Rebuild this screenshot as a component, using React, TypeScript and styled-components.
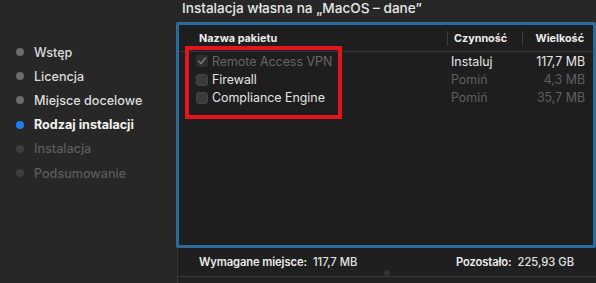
import React from "react";
import styled, { createGlobalStyle } from "styled-components";

const Global = createGlobalStyle`
  html, body { margin: 0; padding: 0; background: #272727; }
  body { font-family: Inter, "Noto Sans", "Liberation Sans", sans-serif; -webkit-font-smoothing: antialiased; }
`;

const Window = styled.div`
  display: flex;
  width: 596px;
  height: 283px;
  background: #272727;
  overflow: hidden;
`;

const Sidebar = styled.ul`
  list-style: none;
  margin: 0;
  padding: 40px 0 0 16px;
  width: 160px;
  display: flex;
  flex-direction: column;
`;

type StepState = "done" | "current" | "todo";

const Step = styled.li<{ $state: StepState }>`
  display: flex;
  align-items: center;
  height: 24.2px;
  gap: 10px;
  font-size: 12.6px;
  font-weight: ${(p) => (p.$state === "current" ? 700 : 500)};
  color: ${(p) =>
    p.$state === "current" ? "#f2f2f2" : p.$state === "done" ? "#dcdcdc" : "#5c5c5c"};
`;

const Bullet = styled.span<{ $state: StepState }>`
  width: 8px;
  height: 8px;
  border-radius: 50%;
  flex: none;
  background: ${(p) =>
    p.$state === "current" ? "#1b7cf6" : p.$state === "done" ? "#6b6b6b" : "#3e3e3e"};
`;

const Main = styled.div`
  flex: 1;
  display: flex;
  flex-direction: column;
  min-width: 0;
`;

const Title = styled.div`
  height: 22px;
  padding-left: 6px;
  font-size: 13.6px;
  font-weight: 500;
  color: #e6e6e6;
  line-height: 17px;
`;

const Box = styled.div`
  position: relative;
  height: 226px;
  box-sizing: border-box;
  border: 3px solid #2a6b9c;
  border-radius: 2px;
  background: #1e1e1e;
  display: flex;
  flex-direction: column;
`;

const HeaderRow = styled.div`
  display: grid;
  grid-template-columns: 268px 75px 1fr;
  height: 27px;
  box-sizing: border-box;
  padding-top: 6px;
  border-bottom: 1px solid #383838;
`;

const HeadCell = styled.div<{ $sep?: boolean; $right?: boolean }>`
  display: flex;
  align-items: center;
  height: 15px;
  font-size: 10.8px;
  font-weight: 700;
  color: #ececec;
  box-sizing: border-box;
  padding-left: ${(p) => (p.$sep ? "6px" : "20px")};
  padding-right: ${(p) => (p.$right ? "9px" : "0")};
  justify-content: ${(p) => (p.$right ? "flex-end" : "flex-start")};
  border-left: ${(p) => (p.$sep ? "1px solid #3c3c3c" : "none")};
`;

const Rows = styled.div`
  display: flex;
  flex-direction: column;
`;

const Row = styled.div`
  display: grid;
  grid-template-columns: 268px 75px 1fr;
  height: 18.4px;
  align-items: center;
  font-size: 12.4px;
`;

const NameCell = styled.div<{ $dim?: boolean }>`
  display: flex;
  align-items: center;
  gap: 4px;
  padding-left: 17px;
  color: ${(p) => (p.$dim ? "#666666" : "#e4e4e4")};
`;

const Check = styled.span<{ $disabled?: boolean }>`
  width: 12px;
  height: 12px;
  border-radius: 3px;
  box-sizing: border-box;
  flex: none;
  display: flex;
  align-items: center;
  justify-content: center;
  background: ${(p) => (p.$disabled ? "#2e2e2e" : "#3b3b3b")};
  border: 1px solid ${(p) => (p.$disabled ? "#333" : "#444")};
`;

const ActionCell = styled.div<{ $dim?: boolean }>`
  padding-left: 4px;
  color: ${(p) => (p.$dim ? "#5f5f5f" : "#e4e4e4")};
`;

const SizeCell = styled.div<{ $dim?: boolean }>`
  text-align: right;
  padding-right: 8px;
  color: ${(p) => (p.$dim ? "#5f5f5f" : "#e4e4e4")};
`;

const Highlight = styled.div`
  position: absolute;
  left: 6px;
  top: 21px;
  width: 157px;
  height: 73px;
  box-sizing: border-box;
  border: 4px solid #e3141e;
  pointer-events: none;
`;

const Footer = styled.div`
  position: relative;
  height: 29px;
  margin-left: 1px;
  box-sizing: border-box;
  border-left: 1px solid #353535;
  border-bottom: 1px solid #3a3a3a;
  background: #1f1f1f;
  display: flex;
  align-items: center;
  padding-left: 21px;
  font-size: 11.2px;
  color: #ececec;
`;

const FooterGroup = styled.div<{ $grow?: boolean; $end?: number }>`
  display: flex;
  gap: 6px;
  flex: ${(p) => (p.$grow ? 1 : "none")};
  margin-right: ${(p) => p.$end ?? 0}px;
`;

const Label = styled.span`
  font-weight: 600;
  letter-spacing: -0.1px;
`;

const Value = styled.span`
  font-weight: 500;
  color: #e2e2e2;
`;

const Dot = styled.span`
  position: absolute;
  left: 206px;
  bottom: 0px;
  width: 6px;
  height: 6px;
  border-radius: 50%;
  background: #343434;
`;

const Below = styled.div`
  flex: 1;
  margin-left: 1px;
  border-left: 1px solid #353535;
  background: #222;
`;

const steps: { label: string; state: StepState }[] = [
  { label: "Wstęp", state: "done" },
  { label: "Licencja", state: "done" },
  { label: "Miejsce docelowe", state: "done" },
  { label: "Rodzaj instalacji", state: "current" },
  { label: "Instalacja", state: "todo" },
  { label: "Podsumowanie", state: "todo" },
];

const packages = [
  { name: "Remote Access VPN", checked: true, disabled: true, action: "Instaluj", size: "117,7 MB" },
  { name: "Firewall", checked: false, disabled: false, action: "Pomiń", size: "4,3 MB" },
  { name: "Compliance Engine", checked: false, disabled: false, action: "Pomiń", size: "35,7 MB" },
];

export default function App() {
  return (
    <>
      <Global />
      <Window>
        <Sidebar>
          {steps.map((s) => (
            <Step key={s.label} $state={s.state}>
              <Bullet $state={s.state} />
              {s.label}
            </Step>
          ))}
        </Sidebar>
        <Main>
          <Title>Instalacja własna na „MacOS – dane”</Title>
          <Box>
            <HeaderRow>
              <HeadCell>Nazwa pakietu</HeadCell>
              <HeadCell $sep>Czynność</HeadCell>
              <HeadCell $sep $right>Wielkość</HeadCell>
            </HeaderRow>
            <Rows>
              {packages.map((p) => {
                const actionDim = !p.checked;
                return (
                  <Row key={p.name}>
                    <NameCell $dim={p.disabled}>
                      <Check $disabled={p.disabled}>
                        {p.checked && (
                          <svg width="10" height="10" viewBox="0 0 10 10">
                            <path d="M1.8 5.2 L4 7.5 L8.3 2.2" fill="none" stroke="#767676" strokeWidth="1.6" strokeLinecap="round" strokeLinejoin="round" />
                          </svg>
                        )}
                      </Check>
                      {p.name}
                    </NameCell>
                    <ActionCell $dim={actionDim}>{p.action}</ActionCell>
                    <SizeCell $dim={actionDim}>{p.size}</SizeCell>
                  </Row>
                );
              })}
            </Rows>
            <Highlight />
          </Box>
          <Footer>
            <FooterGroup $grow>
              <Label>Wymagane miejsce:</Label>
              <Value>117,7 MB</Value>
            </FooterGroup>
            <FooterGroup $end={22}>
              <Label>Pozostało:</Label>
              <Value>225,93 GB</Value>
            </FooterGroup>
            <Dot />
          </Footer>
          <Below />
        </Main>
      </Window>
    </>
  );
}
